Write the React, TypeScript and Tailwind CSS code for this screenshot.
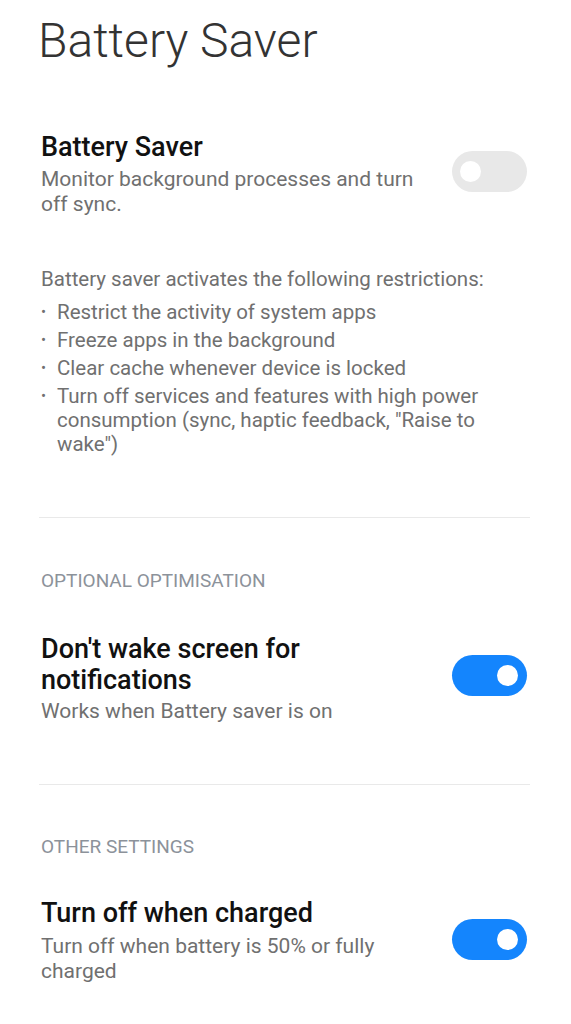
import React from "react";

function Toggle({ on }: { on: boolean }) {
  return (
    <div
      className={
        "shrink-0 w-[75px] h-[41px] rounded-full flex items-center " +
        (on ? "bg-[#1485fd] justify-end pr-[9px]" : "bg-[#e8e8e8] justify-start pl-[8px]")
      }
    >
      <div className="w-[21px] h-[21px] rounded-full bg-white" />
    </div>
  );
}

export default function App() {
  return (
    <div
      className="w-[571px] min-h-[1024px] bg-white pl-[41px] pr-[44px] pt-[13px] overflow-hidden"
      style={{ fontFamily: "Roboto, 'Noto Sans', sans-serif" }}
    >
      <h1 className="text-[48px] leading-[56px] font-light text-[#333333] -ml-[3px]">Battery Saver</h1>

      <div className="mt-[63px] flex items-start justify-between">
        <div className="w-[390px]">
          <div className="text-[27px] leading-[30px] font-medium text-[#111111]">Battery Saver</div>
          <div className="mt-[5px] text-[21px] leading-[25px] text-[#707070]">
            Monitor background processes and turn<br />off sync.
          </div>
        </div>
        <div className="mt-[19px]">
          <Toggle on={false} />
        </div>
      </div>

      <div className="mt-[50px] text-[20.5px] leading-[24px] text-[#707070]">
        <div>Battery saver activates the following restrictions:</div>
        <ul className="mt-[9px] flex flex-col gap-[4px]">
          {[
            "Restrict the activity of system apps",
            "Freeze apps in the background",
            "Clear cache whenever device is locked",
            'Turn off services and features with high power consumption (sync, haptic feedback, "Raise to wake")',
          ].map((t) => (
            <li key={t} className="flex leading-[24px]">
              <span className="w-[16px] shrink-0 text-[15px] leading-[24px]">•</span>
              <span className="pr-[38px]">{t}</span>
            </li>
          ))}
        </ul>
      </div>

      <div className="mt-[61px] h-px bg-[#e9e9e9] -ml-[2px] -mr-[3px]" />

      <div className="mt-[51px] text-[19px] leading-[24px] text-[#8c929a]">OPTIONAL OPTIMISATION</div>

      <div className="mt-[41px] flex items-start justify-between">
        <div className="w-[390px]">
          <div className="text-[27px] leading-[31px] font-medium text-[#111111]">
            Don't wake screen for<br />notifications
          </div>
          <div className="mt-[3px] text-[21px] leading-[25px] text-[#707070]">Works when Battery saver is on</div>
        </div>
        <div className="mt-[21px]">
          <Toggle on={true} />
        </div>
      </div>

      <div className="mt-[60px] h-px bg-[#e9e9e9] -ml-[2px] -mr-[3px]" />

      <div className="mt-[50px] text-[19px] leading-[24px] text-[#8c929a]">OTHER SETTINGS</div>

      <div className="mt-[39px] flex items-start justify-between">
        <div className="w-[390px]">
          <div className="text-[27px] leading-[30px] font-medium text-[#111111]">Turn off when charged</div>
          <div className="mt-[6px] text-[21px] leading-[25px] text-[#707070]">
            Turn off when battery is 50% or fully<br />charged
          </div>
        </div>
        <div className="mt-[21px]">
          <Toggle on={true} />
        </div>
      </div>
    </div>
  );
}
